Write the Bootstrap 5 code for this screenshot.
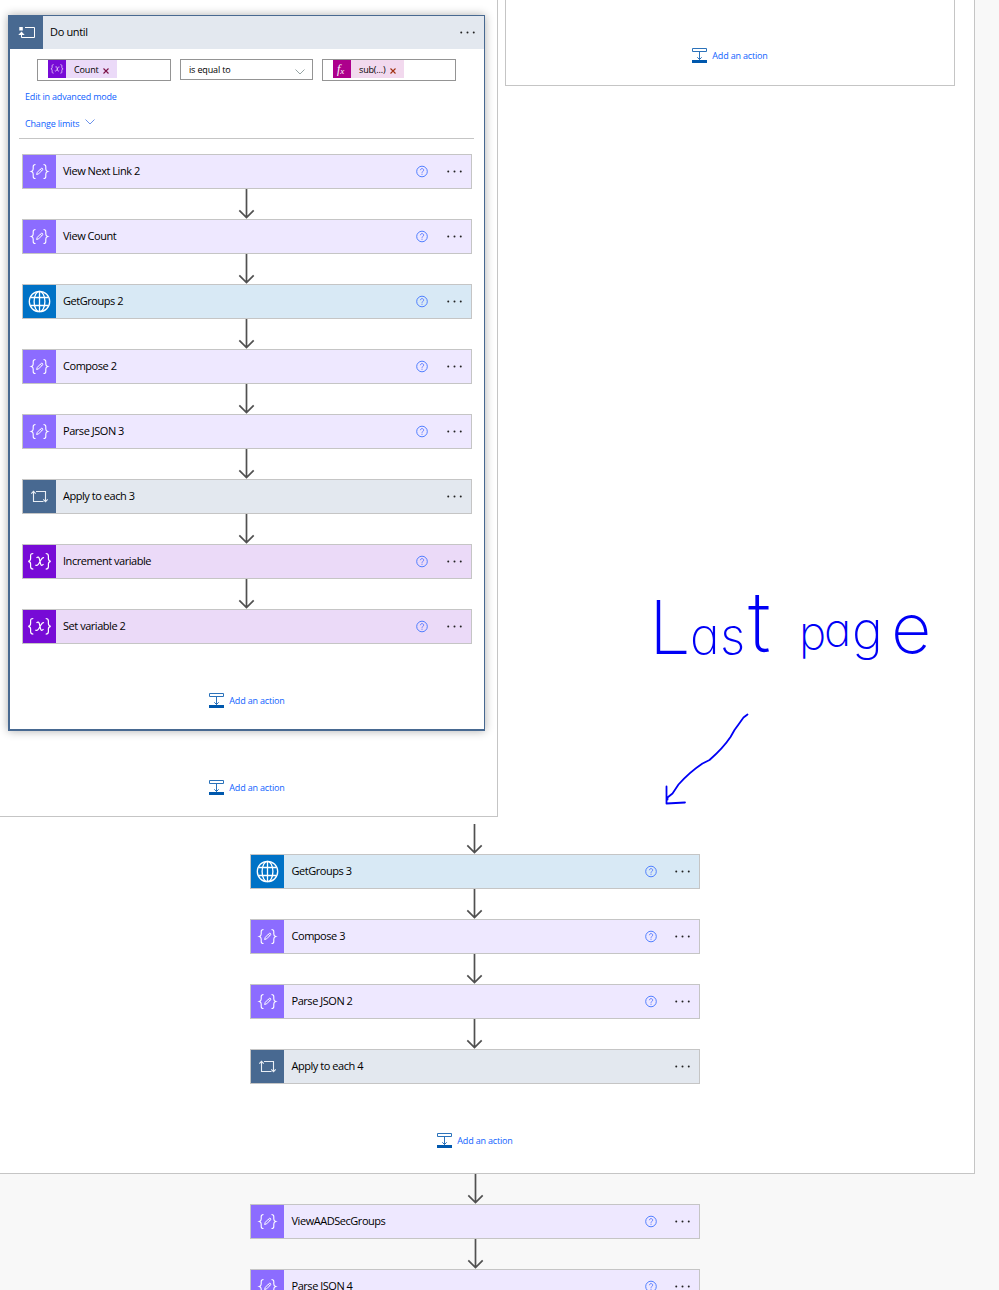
<!DOCTYPE html>
<html lang="en">
<head>
<meta charset="utf-8">
<meta name="viewport" content="width=device-width, initial-scale=1">
<title>Flow designer</title>
<link href="https://cdn.jsdelivr.net/npm/bootstrap@5.3.0/dist/css/bootstrap.min.css" rel="stylesheet">
<style>
  body { background: #f8f8f8; font-family: "Open Sans", "Noto Sans", sans-serif; font-size: 11px; line-height: 15px; color: #000; height: 1290px; overflow: hidden; letter-spacing: -.46px; }
  svg { display: block; flex: none; }
  .scope-main { width: 975px; height: 1174px; background: #fff; border: solid #c5c5c5; border-width: 0 1px 1px 0; }
  .branch-left { width: 498px; height: 817px; border: solid #c5c5c5; border-width: 0 1px 1px 0; padding: 15px 0 0 8px; }
  .branch-right { width: 450px; height: 86px; border: 1px solid #c5c5c5; border-top: 0; margin-left: 7px; padding-top: 48px; }
  .loop { width: 477px; height: 716px; border: solid #486991; border-width: 1px 1px 2px 2px; background: #fff; box-shadow: 0 0 9px rgba(0,0,0,.32); }
  .loop-head { height: 33px; background: #e3e8ef; padding-right: 9px; }
  .loop-title { margin-left: 7px; padding-bottom: 2px; letter-spacing: -.35px; }
  .tile { width: 33px; height: 33px; flex: none; }
  .t-loop { background: #486991; }
  .t-data { background: #8c6cff; }
  .t-http { background: #0072c6; }
  .t-var { background: #770bd6; }
  .fields { padding: 10px 0 0 27px; gap: 9px; height: 32px; }
  .field { width: 134px; height: 22px; border: 1px solid #949494; font-size: 9px; letter-spacing: -.15px; padding-left: 10px; }
  .field.pick { width: 133px; height: 21px; padding: 0 7px 0 8px; }
  .token { height: 18px; line-height: 20px; }
  .token svg.x { margin: 8px 0 0 4px; }
  .tk-var { background: #ebdaf8; width: 69px; }
  .tk-fx { background: #f2d9ee; width: 71px; }
  .tk-label { margin-left: 8px; }
  .lnk { color: #0f62fe; font-size: 9px; letter-spacing: -.18px; text-decoration: none; }
  .loop-links { margin: 0 10px 0 9px; padding: 8px 0 0 6px; height: 58px; border-bottom: 1px solid #c5c5c5; }
  .limits { gap: 6px; margin-top: 12px; }
  .steps { width: 450px; }
  .loop .steps { margin: 15px 0 0 12px; }
  .main-steps { margin-left: 250px; padding-top: 7px; }
  .step { height: 35px; border: 1px solid #c5c5c5; }
  .step .name { margin-left: 7px; padding-bottom: 2px; }
  .step .help { height: 13px; margin-right: 19px; }
  .dots { width: 15px; height: 5px; }
  .step .dots { margin-right: 9px; }
  .main-steps .name { margin-left: 7.500px; }
  .main-steps .help { margin-right: 18.500px; }
  .s-data { background: #eee8ff; }
  .s-http { background: #d8e9f5; }
  .s-loop { background: #e3e8ef; }
  .s-var { background: #ebdaf8; }
  .arrow { margin-left: 216px; }
  .after .arrow { margin-left: 217px; }
  .add { gap: 5px; height: 15px; }
  .add .lnk { line-height: 15px; }
  .loop .add { margin-top: 49px; }
  .branch-left > .add { margin: 49px 11px 0 0; }
  .branch-left > .add .lnk { padding-bottom: 1px; }
  .main-steps .add { margin-top: 49px; }
  .note { left: 640px; top: 580px; }
  .note text { font-family: Inter, sans-serif; font-weight: 200; font-feature-settings: "cv11"; fill: #0000f5; letter-spacing: 0; }
</style>
</head>
<body>
<svg width="0" height="0" class="position-absolute" aria-hidden="true">
  <symbol id="data" viewBox="0 0 33 33"><g fill="none" stroke="#fff" stroke-width="1.100"><path d="M12.500 9.500c-2 0-2.300.7-2.300 2.100v2.400c0 1.500-.5 2.100-1.900 2.500 1.400.4 1.900 1 1.900 2.500v2.400c0 1.400.3 2.100 2.300 2.100M20.500 9.500c2 0 2.300.7 2.300 2.100v2.400c0 1.500.5 2.100 1.900 2.500-1.400.4-1.900 1-1.900 2.500v2.400c0 1.400-.3 2.100-2.300 2.100"/><path stroke-width="1" d="M13.600 19.500l.7-2.200 3.900-3.900c.9-.7 2.100.4 1.400 1.400l-3.900 4zM17.300 14.200l1.500 1.500"/></g></symbol>
  <symbol id="globe" viewBox="0 0 33 33"><g fill="none" stroke="#fff" stroke-width="1.300"><circle cx="16.500" cy="16.500" r="10.200"/><ellipse cx="16.500" cy="16.500" rx="5.400" ry="10.200"/><path d="M16.500 6.300v20.400M7.300 12.500h18.400M7.300 20.500h18.400"/></g></symbol>
  <symbol id="each" viewBox="0 0 33 33"><g fill="none" stroke="#e9eef5" stroke-width="1.100"><path d="M10.500 11.500v10h10M13 11.500h9.500v10"/><path d="M8.300 13.700l2.200-2.300 2.200 2.300M20.300 19.300l2.200 2.300 2.200-2.300"/></g></symbol>
  <symbol id="until" viewBox="0 0 33 33"><path fill="none" stroke="#fff" d="M15 11.500H24.500V21.500H11.500V18"/><path fill="#fff" d="M9.300 11h3.500v3.500H9.300zM8.300 19l3.200-3.500L14.700 19z"/></symbol>
  <symbol id="var" viewBox="0 0 33 33"><g fill="none" stroke="#fff" stroke-width="1.200"><path d="M10.300 8.500c-2.400 0-2.700.9-2.700 2.400v2.600c0 1.700-.6 2.500-2.300 2.800 1.700.3 2.300 1.100 2.300 2.800v2.600c0 1.500.3 2.400 2.700 2.400M22.700 8.500c2.400 0 2.700.9 2.700 2.400v2.600c0 1.700.6 2.500 2.300 2.800-1.700.3-2.300 1.100-2.300 2.800v2.600c0 1.500-.3 2.400-2.700 2.400"/><path d="M13.500 12.900c1.400-1.400 2.500-.9 2.900 1l1.100 4.800c.4 1.900 1.500 2.200 3 .4M21 12.700c-3.200-1.300-4.500 8.200-7.500 7.700-.6 0-.9-.2-1.100-.5"/></g></symbol>
  <symbol id="arr" viewBox="0 0 17 30"><path fill="none" stroke="#505050" stroke-width="1.700" d="M8.500 0v28.500M1.300 21.300l7.200 7.200 7.200-7.200"/></symbol>
  <symbol id="q" viewBox="0 0 12 12"><circle cx="6" cy="6" r="5.300" fill="none" stroke="#3f74ff" stroke-width=".9"/><path d="M4.400 4.700c0-2.100 3.300-2.100 3.300-.1C7.700 5.800 6 5.800 6 7.300M6 8.200v1.100" fill="none" stroke="#5575ff" stroke-width=".9"/></symbol>
  <symbol id="dots" viewBox="0 0 15 5"><g fill="#222"><circle cx="1.250" cy="2.500" r="1"/><circle cx="7.500" cy="2.500" r="1"/><circle cx="13.750" cy="2.500" r="1"/></g></symbol>
  <symbol id="ins" viewBox="0 0 15 15"><path fill="none" stroke="#2b72ba" d="M.5.500h14v3H.500zM7.500 4v8M5.300 9.300l2.200 2.200 2.200-2.200"/><path fill="#0058ad" d="M0 12h15v3H0z"/></symbol>
  <symbol id="chev" viewBox="0 0 10 6"><path fill="none" stroke="currentColor" stroke-width=".9" d="M.5.500L5 5 9.500.500"/></symbol>
  <symbol id="close" viewBox="0 0 6 6"><path fill="none" stroke="currentColor" stroke-width="1.100" d="M.5.500l5 5M5.500.500l-5 5"/></symbol>
</svg>

<main class="scope-main">
  <div class="d-flex align-items-start">
    <section class="branch-left">
      <div class="loop">
        <div class="loop-head d-flex align-items-center">
          <svg class="tile t-loop"><use href="#until"/></svg>
          <span class="loop-title me-auto">Do until</span>
          <svg class="dots"><use href="#dots"/></svg>
        </div>
        <div class="fields d-flex">
          <div class="field"><div class="token tk-var d-flex"><svg class="t-var" width="18" height="18" viewBox="0 0 33 33"><use href="#var"/></svg><span class="tk-label">Count</span><svg class="x" width="6" height="6" color="#7a1045"><use href="#close"/></svg></div></div>
          <div class="field pick d-flex justify-content-between align-items-center"><span>is equal to</span><svg width="10" height="6" color="#8a9a9a" class="mt-1"><use href="#chev"/></svg></div>
          <div class="field"><div class="token tk-fx d-flex"><svg width="18" height="18"><rect width="18" height="18" fill="#ad008c"/><text x="4" y="12.500" fill="#fff" font-family="Liberation Serif, serif" font-style="italic" font-size="12">f<tspan font-size="9" dy="1">x</tspan></text></svg><span class="tk-label">sub(...)</span><svg class="x" width="6" height="6" color="#a03010"><use href="#close"/></svg></div></div>
        </div>
        <div class="loop-links">
          <div class="d-flex"><a class="lnk" href="#">Edit in advanced mode</a></div>
          <div class="limits d-flex align-items-center"><a class="lnk" href="#">Change limits</a><svg width="10" height="6" color="#5b86e8" class="mb-1"><use href="#chev"/></svg></div>
        </div>
        <div class="steps">
          <div class="step s-data d-flex align-items-center"><svg class="tile t-data"><use href="#data"/></svg><span class="name me-auto">View Next Link 2</span><svg class="help" width="12" height="12"><use href="#q"/></svg><svg class="dots"><use href="#dots"/></svg></div>
          <svg class="arrow" width="17" height="30"><use href="#arr"/></svg>
          <div class="step s-data d-flex align-items-center"><svg class="tile t-data"><use href="#data"/></svg><span class="name me-auto">View Count</span><svg class="help" width="12" height="12"><use href="#q"/></svg><svg class="dots"><use href="#dots"/></svg></div>
          <svg class="arrow" width="17" height="30"><use href="#arr"/></svg>
          <div class="step s-http d-flex align-items-center"><svg class="tile t-http"><use href="#globe"/></svg><span class="name me-auto">GetGroups 2</span><svg class="help" width="12" height="12"><use href="#q"/></svg><svg class="dots"><use href="#dots"/></svg></div>
          <svg class="arrow" width="17" height="30"><use href="#arr"/></svg>
          <div class="step s-data d-flex align-items-center"><svg class="tile t-data"><use href="#data"/></svg><span class="name me-auto">Compose 2</span><svg class="help" width="12" height="12"><use href="#q"/></svg><svg class="dots"><use href="#dots"/></svg></div>
          <svg class="arrow" width="17" height="30"><use href="#arr"/></svg>
          <div class="step s-data d-flex align-items-center"><svg class="tile t-data"><use href="#data"/></svg><span class="name me-auto">Parse JSON 3</span><svg class="help" width="12" height="12"><use href="#q"/></svg><svg class="dots"><use href="#dots"/></svg></div>
          <svg class="arrow" width="17" height="30"><use href="#arr"/></svg>
          <div class="step s-loop d-flex align-items-center"><svg class="tile t-loop"><use href="#each"/></svg><span class="name me-auto">Apply to each 3</span><svg class="dots"><use href="#dots"/></svg></div>
          <svg class="arrow" width="17" height="30"><use href="#arr"/></svg>
          <div class="step s-var d-flex align-items-center"><svg class="tile t-var"><use href="#var"/></svg><span class="name me-auto">Increment variable</span><svg class="help" width="12" height="12"><use href="#q"/></svg><svg class="dots"><use href="#dots"/></svg></div>
          <svg class="arrow" width="17" height="30"><use href="#arr"/></svg>
          <div class="step s-var d-flex align-items-center"><svg class="tile t-var"><use href="#var"/></svg><span class="name me-auto">Set variable 2</span><svg class="help" width="12" height="12"><use href="#q"/></svg><svg class="dots"><use href="#dots"/></svg></div>
        </div>
        <div class="add d-flex justify-content-center align-items-center"><svg width="15" height="15"><use href="#ins"/></svg><a class="lnk" href="#">Add an action</a></div>
      </div>
      <div class="add d-flex justify-content-center align-items-center"><svg width="15" height="15"><use href="#ins"/></svg><a class="lnk" href="#">Add an action</a></div>
    </section>
    <section class="branch-right">
      <div class="add d-flex justify-content-center align-items-center"><svg width="15" height="15"><use href="#ins"/></svg><a class="lnk" href="#">Add an action</a></div>
    </section>
  </div>
  <div class="main-steps">
    <div class="steps">
      <svg class="arrow" width="17" height="30"><use href="#arr"/></svg>
      <div class="step s-http d-flex align-items-center"><svg class="tile t-http"><use href="#globe"/></svg><span class="name me-auto">GetGroups 3</span><svg class="help" width="12" height="12"><use href="#q"/></svg><svg class="dots"><use href="#dots"/></svg></div>
      <svg class="arrow" width="17" height="30"><use href="#arr"/></svg>
      <div class="step s-data d-flex align-items-center"><svg class="tile t-data"><use href="#data"/></svg><span class="name me-auto">Compose 3</span><svg class="help" width="12" height="12"><use href="#q"/></svg><svg class="dots"><use href="#dots"/></svg></div>
      <svg class="arrow" width="17" height="30"><use href="#arr"/></svg>
      <div class="step s-data d-flex align-items-center"><svg class="tile t-data"><use href="#data"/></svg><span class="name me-auto">Parse JSON 2</span><svg class="help" width="12" height="12"><use href="#q"/></svg><svg class="dots"><use href="#dots"/></svg></div>
      <svg class="arrow" width="17" height="30"><use href="#arr"/></svg>
      <div class="step s-loop d-flex align-items-center"><svg class="tile t-loop"><use href="#each"/></svg><span class="name me-auto">Apply to each 4</span><svg class="dots"><use href="#dots"/></svg></div>
      <div class="add d-flex justify-content-center align-items-center"><svg width="15" height="15"><use href="#ins"/></svg><a class="lnk" href="#">Add an action</a></div>
    </div>
  </div>
</main>
<div class="main-steps after pt-0">
  <div class="steps">
    <svg class="arrow" width="17" height="30"><use href="#arr"/></svg>
    <div class="step s-data d-flex align-items-center"><svg class="tile t-data"><use href="#data"/></svg><span class="name me-auto">ViewAADSecGroups</span><svg class="help" width="12" height="12"><use href="#q"/></svg><svg class="dots"><use href="#dots"/></svg></div>
    <svg class="arrow" width="17" height="30"><use href="#arr"/></svg>
    <div class="step s-data d-flex align-items-center"><svg class="tile t-data"><use href="#data"/></svg><span class="name me-auto">Parse JSON 4</span><svg class="help" width="12" height="12"><use href="#q"/></svg><svg class="dots"><use href="#dots"/></svg></div>
  </div>
</div>
<!-- ink annotation lying over the canvas -->
<svg class="note position-absolute" width="310" height="240">
  <text x="9 50 80 108" y="74" font-size="74">L<tspan font-size="50">as</tspan><tspan font-size="84" dy="-2">t</tspan></text>
  <text x="159 184 212 251" y="69 66 69 73" font-size="46">pa<tspan font-size="52">g</tspan><tspan font-size="70">e</tspan></text>
  <path fill="none" stroke="#0000f5" stroke-width="1.800" stroke-linecap="round" stroke-linejoin="round" d="M107.500 134.500l-4 3-5 7-4 5.500-4 7c-6 9-13 16-21 23l-7 3.500c-9 6-16 12-24 21l-6 9-5 4v2M26.500 206.500V223.500L45 222.500"/>
</svg>
<script src="https://cdn.jsdelivr.net/npm/bootstrap@5.3.0/dist/js/bootstrap.bundle.min.js"></script>
</body>
</html>
